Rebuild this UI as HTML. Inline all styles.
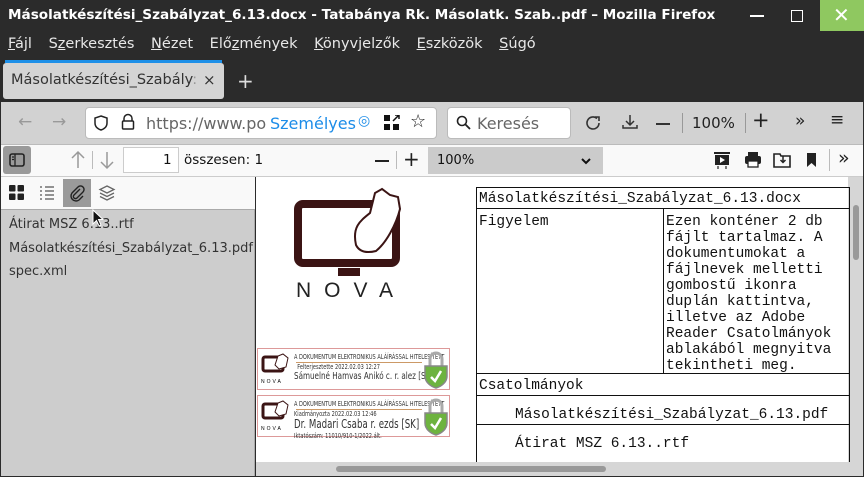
<!DOCTYPE html>
<html><head><meta charset="utf-8"><style>
*{margin:0;padding:0;box-sizing:border-box}
body{width:864px;height:477px;overflow:hidden;background:#2b2b2b;font-family:"DejaVu Sans","Liberation Sans",sans-serif;position:relative}
.a{position:absolute}
.t{color:#fff;font-weight:bold;font-size:13.6px;left:8px;top:7px;white-space:nowrap}
.menu{top:36px;left:8px;color:#e8e8e8;font-size:14.5px;white-space:nowrap}
.menu span{margin-right:12px}
.menu u{text-decoration:underline}
.mono{font-family:"Liberation Mono","DejaVu Sans Mono",monospace;font-size:14.5px;color:#111;line-height:16px}
.sig{font-size:7px;color:#333;white-space:nowrap;line-height:10px;transform:scaleX(0.72);transform-origin:0 0}
</style></head><body>
<div class="a t">Másolatkészítési_Szabályzat_6.13.docx - Tatabánya Rk. Másolatk. Szab..pdf – Mozilla Firefox</div>
<div class="a" style="left:750px;top:15px;width:14px;height:1.5px;background:#fff"></div>
<div class="a" style="left:791px;top:10px;width:12px;height:12px;border:1.5px solid #fff"></div>
<div class="a" style="left:820px;top:0;width:44px;height:31px;background:#8fc860"></div>
<div class="a" style="left:833px;top:3px;color:#fff;font-size:20px;font-weight:200">✕</div>
<div class="a menu"><span><u>F</u>ájl</span> <span>S<u>z</u>erkesztés</span> <span><u>N</u>ézet</span> <span>Elő<u>z</u>mények</span> <span><u>K</u>önyvjelzők</span> <span><u>E</u>szközök</span> <span><u>S</u>úgó</span></div>
<div class="a" style="left:5px;top:60px;width:217px;height:3px;background:#1e90e8"></div>
<div class="a" style="left:3px;top:63px;width:221px;height:36px;background:#d4d4d4;border-radius:3px"></div>
<div class="a" style="left:11px;top:72px;font-size:14.5px;color:#333;white-space:nowrap;width:190px;overflow:hidden">Másolatkészítési_Szabály<span style="color:#999">:</span></div>
<div class="a" style="left:203px;top:71px;font-size:15px;color:#333">×</div>
<div class="a" style="left:237px;top:69px;font-size:20px;color:#ddd">+</div>
<div class="a" style="left:1px;top:102px;width:862px;height:42px;background:#d2d2d2"></div>
<div class="a" style="left:18px;top:112px;font-size:17px;color:#999">←</div>
<div class="a" style="left:52px;top:112px;font-size:17px;color:#999">→</div>
<div class="a" style="left:85px;top:107px;width:352px;height:32px;background:#fff;border:1px solid #bbb;border-radius:4px"></div>
<svg class="a" style="left:92px;top:114px" width="18" height="18"><path d="M9 2 L15 4 V9 C15 13 12 15 9 16 C6 15 3 13 3 9 V4 Z" fill="none" stroke="#222" stroke-width="1.5"/></svg>
<svg class="a" style="left:120px;top:113px" width="16" height="18"><path d="M4 8 V5.5 a4 4 0 0 1 8 0 V8" fill="none" stroke="#222" stroke-width="1.5"/><rect x="2.5" y="8" width="11" height="8" rx="1" fill="none" stroke="#222" stroke-width="1.5"/></svg>
<div class="a" style="left:146px;top:114px;font-size:16px;color:#666;white-space:nowrap">https://www.po</div>
<div class="a" style="left:270px;top:114px;font-size:16px;color:#1c8ce8;white-space:nowrap">Személyes</div>
<div class="a" style="left:358px;top:113px;font-size:14px;color:#1c8ce8">◎</div>
<svg class="a" style="left:384px;top:115px" width="16" height="16"><rect x="0" y="0" width="6" height="6" fill="#111"/><rect x="0" y="9" width="6" height="6" fill="#111"/><rect x="9" y="9" width="6" height="6" fill="#111"/><path d="M9 6 L15 0 M11 0 H15 V4" stroke="#111" stroke-width="1.5" fill="none"/></svg>
<div class="a" style="left:410px;top:111px;font-size:18px;color:#222">☆</div>
<div class="a" style="left:447px;top:107px;width:124px;height:32px;background:#fff;border:1px solid #bbb;border-radius:4px"></div>
<svg class="a" style="left:456px;top:115px" width="16" height="16"><circle cx="6" cy="6" r="4.5" fill="none" stroke="#222" stroke-width="1.6"/><path d="M9.5 9.5 L14 14" stroke="#222" stroke-width="1.8"/></svg>
<div class="a" style="left:477px;top:114px;font-size:16px;color:#666">Keresés</div>
<svg class="a" style="left:585px;top:114px" width="18" height="18"><path d="M14 9 A6 6 0 1 1 12 4.5" fill="none" stroke="#333" stroke-width="1.6"/><path d="M10 3 H14 V7" fill="none" stroke="#333" stroke-width="1.6"/></svg>
<svg class="a" style="left:621px;top:113px" width="18" height="18"><path d="M9 2 V12 M5 8 L9 12 L13 8 M2 12 V15 H16 V12" fill="none" stroke="#333" stroke-width="1.5"/></svg>
<div class="a" style="left:656px;top:123px;width:14px;height:1.5px;background:#333"></div>
<div class="a" style="left:682px;top:113px;width:1px;height:20px;background:#999"></div>
<div class="a" style="left:692px;top:114px;font-size:15px;color:#222">100%</div>
<div class="a" style="left:745px;top:113px;width:1px;height:20px;background:#999"></div>
<div class="a" style="left:752px;top:108px;font-size:21px;color:#222">+</div>
<div class="a" style="left:795px;top:111px;font-size:17px;color:#222">»</div>
<div class="a" style="left:830px;top:110px;font-size:17px;color:#222">≡</div>
<div class="a" style="left:1px;top:144px;width:862px;height:33px;background:#f9f9f9;border-top:1px solid #bbb;border-bottom:1px solid #ccc"></div>
<div class="a" style="left:3px;top:146px;width:28px;height:28px;background:#9a9a9a;border-radius:3px"></div>
<svg class="a" style="left:9px;top:153px" width="16" height="14"><rect x="1" y="1" width="14" height="12" rx="2" fill="none" stroke="#222" stroke-width="1.6"/><path d="M6 1 V13 M3 4 H5 M3 6.5 H5" stroke="#222" stroke-width="1.3"/></svg>
<svg class="a" style="left:70px;top:150px" width="16" height="20"><path d="M8 2 V18 M2 8 L8 2 L14 8" fill="none" stroke="#999" stroke-width="1.5"/></svg>
<div class="a" style="left:92px;top:151px;width:1px;height:18px;background:#bbb"></div>
<svg class="a" style="left:99px;top:150px" width="16" height="20"><path d="M8 2 V18 M2 12 L8 18 L14 12" fill="none" stroke="#999" stroke-width="1.5"/></svg>
<div class="a" style="left:123px;top:147px;width:56px;height:26px;background:#fff;border:1px solid #ccc"></div>
<div class="a" style="left:163px;top:152px;font-size:13.5px;color:#111">1</div>
<div class="a" style="left:184px;top:152px;font-size:13.5px;color:#111">összesen: 1</div>
<div class="a" style="left:375px;top:160px;width:14px;height:2px;background:#222"></div>
<div class="a" style="left:396px;top:151px;width:1px;height:18px;background:#bbb"></div>
<div class="a" style="left:403px;top:147px;font-size:20px;color:#222">+</div>
<div class="a" style="left:428px;top:147px;width:175px;height:27px;background:#cbcbcb"></div>
<div class="a" style="left:437px;top:153px;font-size:13px;color:#111">100%</div>
<svg class="a" style="left:581px;top:157px" width="10" height="8"><path d="M1 2 L5 6 L9 2" fill="none" stroke="#111" stroke-width="2"/></svg>
<svg class="a" style="left:713px;top:151px" width="20" height="20"><rect x="1" y="1" width="16" height="2" fill="#222"/><rect x="2" y="4" width="14" height="10" fill="#222"/><path d="M7 6 L12 9 L7 12Z" fill="#fff"/><path d="M5 15 V18 M13 15 V18" stroke="#222" stroke-width="1.2"/></svg>
<svg class="a" style="left:743px;top:151px" width="20" height="18"><rect x="5" y="1" width="10" height="4" fill="#222"/><rect x="2" y="5" width="16" height="8" rx="2" fill="#222"/><rect x="5" y="10" width="10" height="6" fill="#fff" stroke="#222" stroke-width="1.3"/></svg>
<svg class="a" style="left:773px;top:151px" width="18" height="18"><path d="M1 3 H7 L8 5 H17 V16 H1 Z" fill="none" stroke="#222" stroke-width="1.6"/><path d="M10 5 V11 M7.5 9 L10 11.5 L12.5 9" stroke="#222" stroke-width="1.5" fill="none"/></svg>
<svg class="a" style="left:806px;top:152px" width="12" height="16"><path d="M1 1 H10 V15 L5.5 11 L1 15 Z" fill="#222"/></svg>
<div class="a" style="left:829px;top:149px;width:1px;height:22px;background:#bbb"></div>
<div class="a" style="left:838px;top:147px;font-size:19px;color:#222">»</div>
<div class="a" style="left:1px;top:177px;width:254px;height:33px;background:#f9f9f9;border-bottom:1px solid #aaa"></div>
<svg class="a" style="left:9px;top:185px" width="16" height="16"><rect x="0" y="0" width="6.5" height="6.5" rx="1" fill="#222"/><rect x="8.5" y="0" width="6.5" height="6.5" rx="1" fill="#222"/><rect x="0" y="8.5" width="6.5" height="6.5" rx="1" fill="#222"/><rect x="8.5" y="8.5" width="6.5" height="6.5" rx="1" fill="#222"/></svg>
<svg class="a" style="left:39px;top:185px" width="16" height="16"><path d="M1 2H3M6 2H15M1 6H3M6 6H15M1 10H3M6 10H15M1 14H3M6 14H15" stroke="#555" stroke-width="1.3"/></svg>
<div class="a" style="left:63px;top:179px;width:28px;height:28px;background:#9a9a9a"></div>
<svg class="a" style="left:68px;top:184px" width="18" height="18"><path d="M12 5 L6 11 a2 2 0 0 0 3 3 L15 8 a3.5 3.5 0 0 0 -5 -5 L4 9 a5 5 0 0 0 7 7 L15 12" fill="none" stroke="#222" stroke-width="1.4"/></svg>
<svg class="a" style="left:98px;top:184px" width="18" height="18"><path d="M9 2 L16 5.5 L9 9 L2 5.5Z M2 9 L9 12.5 L16 9 M2 12.5 L9 16 L16 12.5" fill="none" stroke="#666" stroke-width="1.3"/></svg>
<div class="a" style="left:1px;top:210px;width:254px;height:266px;background:#cdcdcd;border-right:1px solid #aaa"></div>
<div class="a" style="left:9px;top:213px;font-size:13px;color:#333;line-height:23.5px;white-space:nowrap">Átirat MSZ 6.13..rtf<br>Másolatkészítési_Szabályzat_6.13.pdf<br>spec.xml</div>
<svg class="a" style="left:92px;top:209px" width="12" height="18"><path d="M1 1 V15 L4.5 11.5 L7 17 L9 16 L6.5 10.5 L11 10.5 Z" fill="#111" stroke="#fff" stroke-width="1"/></svg>
<div class="a" style="left:256px;top:177px;width:592px;height:285px;background:#fff"></div>
<div class="a" style="left:848px;top:177px;width:15px;height:299px;background:#d6d6d6"></div>
<div class="a" style="left:853px;top:205px;width:6px;height:55px;background:#999;border-radius:3px"></div>
<svg class="a" style="left:290px;top:187px" width="115" height="115"><rect x="8" y="17" width="98" height="59" rx="5" fill="none" stroke="#3b1414" stroke-width="8"/><rect x="48" y="81" width="22" height="8" fill="#3b1414"/><path d="M66 58 C62 40 70 34 80 26 L85 6 L92 2 L100 8 L108 10 L110 22 C106 38 96 56 86 64 C78 66 70 66 66 58Z" fill="#fff" stroke="#3b1414" stroke-width="2"/><text x="6" y="110" font-family="Liberation Sans,sans-serif" font-size="21" fill="#222" letter-spacing="13">NOVA</text></svg>
<div class="a" style="left:257px;top:348px;width:193px;height:42px;border:1px solid #d99"></div>
<div class="a" style="left:257px;top:395px;width:193px;height:42px;border:1px solid #d99"></div>
<div class="a sig" style="left:294px;top:352px">A DOKUMENTUM ELEKTRONIKUS ALÁÍRÁSSAL HITELESÍTETT<br>&nbsp;&nbsp;Felterjesztette 2022.02.03 12:27<br><span style="font-size:10px">Sámuelné Hamvas Anikó c. r. alez [SK]</span></div>
<div class="a sig" style="left:294px;top:399px">A DOKUMENTUM ELEKTRONIKUS ALÁÍRÁSSAL HITELESÍTETT<br>Kiadmányozta 2022.02.03 12:46<br><span style="font-size:12px">Dr. Madari Csaba r. ezds [SK]</span><br>Iktatószám: 11010/910-1/2022.ált.</div>
<div class="a" style="left:296px;top:362px;width:126px;height:1px;background:#c96"></div>
<div class="a" style="left:296px;top:409px;width:126px;height:1px;background:#c96"></div>
<svg class="a" style="left:261px;top:353px" width="30" height="33"><rect x="2" y="4" width="20" height="14" rx="2" fill="none" stroke="#3b1414" stroke-width="3"/><path d="M14 12 L17 3 L22 1 L27 5 L25 14 L18 16Z" fill="#fff" stroke="#3b1414"/><text x="0" y="30" font-size="5" font-family="Liberation Sans" letter-spacing="2">NOVA</text></svg>
<svg class="a" style="left:261px;top:400px" width="30" height="33"><rect x="2" y="4" width="20" height="14" rx="2" fill="none" stroke="#3b1414" stroke-width="3"/><path d="M14 12 L17 3 L22 1 L27 5 L25 14 L18 16Z" fill="#fff" stroke="#3b1414"/><text x="0" y="30" font-size="5" font-family="Liberation Sans" letter-spacing="2">NOVA</text></svg>
<svg class="a" style="left:422px;top:350px" width="28" height="40"><path d="M8 16 V9 a6 6 0 0 1 12 0 V16" fill="none" stroke="#aaa" stroke-width="3"/><path d="M3 16 H25 V26 C25 33 18 37 14 38 C10 37 3 33 3 26Z" fill="#6db33f" stroke="#888" stroke-width="1.5"/><path d="M9 27 L13 31 L19 21" fill="none" stroke="#fff" stroke-width="2.5"/></svg>
<svg class="a" style="left:422px;top:397px" width="28" height="40"><path d="M8 16 V9 a6 6 0 0 1 12 0 V16" fill="none" stroke="#aaa" stroke-width="3"/><path d="M3 16 H25 V26 C25 33 18 37 14 38 C10 37 3 33 3 26Z" fill="#6db33f" stroke="#888" stroke-width="1.5"/><path d="M9 27 L13 31 L19 21" fill="none" stroke="#fff" stroke-width="2.5"/></svg>
<div class="a mono" style="left:476px;top:187px;width:374px;height:275px;border:1px solid #111;border-bottom:none;overflow:hidden">
<div style="height:21px;border-bottom:1px solid #111;padding:3px 2px">Másolatkészítési_Szabályzat_6.13.docx</div>
<div style="height:165px;border-bottom:1px solid #111;display:flex"><div style="flex:none;width:187px;border-right:1px solid #111;padding:5px 2px">Figyelem</div><div style="flex:1;padding:5px 2px;overflow:hidden">Ezen konténer 2 db fájlt tartalmaz. A dokumentumokat a fájlnevek melletti gombostű ikonra duplán kattintva, illetve az Adobe Reader Csatolmányok ablakából megnyitva tekintheti meg.</div></div>
<div style="height:22px;border-bottom:1px solid #111;padding:4px 2px">Csatolmányok</div>
<div style="height:29px;border-bottom:1px solid #111;padding:11px 38px 0">Másolatkészítési_Szabályzat_6.13.pdf</div>
<div style="padding:11px 38px">Átirat MSZ 6.13..rtf</div>
</div>
<div class="a" style="left:256px;top:462px;width:592px;height:14px;background:#d6d6d6"></div>
<div class="a" style="left:336px;top:466px;width:270px;height:6px;background:#999;border-radius:3px"></div>
</body></html>
